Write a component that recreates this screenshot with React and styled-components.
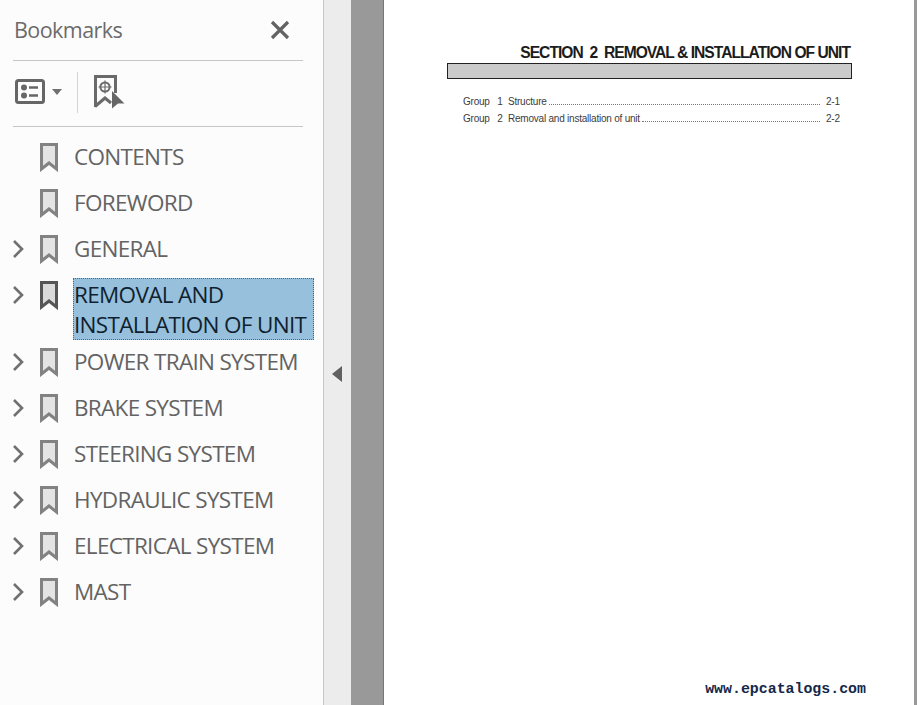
import React from "react";
import styled, { createGlobalStyle } from "styled-components";

const Global = createGlobalStyle`
  html, body { margin: 0; padding: 0; height: 100%; overflow: hidden; background: #fff; }
  #root { height: 100%; }
`;
const Shell = styled.div`
  display: flex; width: 917px; height: 705px; overflow: hidden;
  font-family: "Open Sans", "Noto Sans", sans-serif;
`;
const Sidebar = styled.aside`
  box-sizing: border-box; background: #fcfcfc; flex: none;
  border-right: 1px solid #c8c8c8; width: 324px;
  display: flex; flex-direction: column;
`;
const Header = styled.header`
  margin: 0 20px 0 13px; height: 60px;
  border-bottom: 1px solid #c6c6c6;
  display: flex; align-items: center; justify-content: space-between;
`;
const Title = styled.h2`
  margin: -2px 0 0 1px; font-size: 21.5px; font-weight: 400; color: #6b6b6b; letter-spacing: -0.55px;
`;
const CloseButton = styled.button`
  border: 0; background: none; padding: 0; margin-right: 13px; display: flex; height: 20px;
`;
const Toolbar = styled.div`
  margin: 0 20px 0 13px; height: 66px; box-sizing: border-box; padding-bottom: 3px;
  border-bottom: 1px solid #c6c6c6;
  display: flex; align-items: center;
`;
const ToolGroup = styled.div`
  display: flex; align-items: center; gap: 7px; padding-left: 2px; width: 62px; height: 41px;
  border-right: 1px solid #d4d4d4; margin-right: 16px;
`;
const List = styled.ul`
  list-style: none; margin: 7px 0 0; padding: 0;
`;
const Row = styled.li`
  display: flex; align-items: flex-start;
  padding: 8px 0 ${p => (p.$selected ? "0" : "8px")};
  margin-bottom: ${p => (p.$selected ? "-1px" : "0")};
`;
const Twist = styled.span`
  width: 24px; margin-left: 11px; margin-right: 5px; height: 30px; flex: none;
  display: flex; align-items: center; visibility: ${p => (p.$hidden ? "hidden" : "visible")};
`;
const Mark = styled.span`
  width: 18px; height: 30px; flex: none; margin-right: 16px; display: flex; align-items: center;
`;
const Label = styled.span`
  font-size: 22.5px; line-height: 30px; letter-spacing: -0.68px; white-space: nowrap;
  color: ${p => (p.$selected ? "#101f30" : "#636363")};
  ${p => p.$selected && `
    background: #97c0dc; outline: 1px dotted #4a6a80; outline-offset: -1px;
    margin-left: -1px; padding: 2px 9px 0 1px; margin-top: -2px; width: 231px;
  `}
`;
const Splitter = styled.div`
  width: 27px; flex: none; background: #ececec; box-sizing: border-box; padding: 42px 2px 0 0;
  display: flex; align-items: center; justify-content: center;
`;
const Gutter = styled.div`
  flex: 1; background: #999; display: flex; padding: 0 3px 0 32px;
`;
const Page = styled.main`
  flex: 1; background: #fff; box-sizing: border-box; border-left: 1px solid #777;
  padding: 43px 62px 7px 63px;
  display: flex; flex-direction: column; font-family: "Liberation Sans", Arial, sans-serif;
`;
const SectionTitle = styled.h1`
  margin: 0; text-align: right; padding-right: 2px; font-size: 15.6px; line-height: 20px; font-weight: 700;
  color: #1c1c1c; letter-spacing: -0.97px; white-space: pre;
`;
const SectionBar = styled.div`
  height: 14px; background: #cbcbcb; border: 1px solid #222;
`;
const Toc = styled.div`
  margin: 16px 12px 0 16px; display: flex; flex-direction: column; gap: 3px;
`;
const TocRow = styled.div`
  display: flex; align-items: baseline; height: 14px; font-size: 10px; line-height: 14px; color: #3c3c3c;
  letter-spacing: -0.22px; white-space: pre;
`;
const Group = styled.span` width: 45px; flex: none; `;
const Leader = styled.span`
  flex: 1; margin: 0 6px 0 2px; border-bottom: 1px dotted #777; height: 9px; min-width: 0;
`;
const PageNo = styled.span` width: 14px; flex: none; `;
const Footer = styled.div`
  margin-top: auto; text-align: right; margin-right: -14px;
  font: 700 14.9px/18px "Liberation Mono", monospace; color: #14284a;
`;

const Bookmark = ({ dark }) => (
  <svg width="18" height="29" viewBox="0 0 18 29" fill={dark ? "#dadada" : "#e4e4e4"} stroke={dark ? "#555" : "#828282"} strokeWidth="3">
    <path d="M1.5 1.5H16.5V26L9 20L1.5 26Z" />
  </svg>
);
const Chevron = () => (
  <svg width="14" height="20" viewBox="0 0 14 20" fill="none" stroke="#707070" strokeWidth="2.6">
    <path d="M3 2L11 10L3 18" />
  </svg>
);

const items = [
  ["CONTENTS"], ["FOREWORD"], ["GENERAL", 1], ["REMOVAL AND\nINSTALLATION OF UNIT", 1, 1],
  ["POWER TRAIN SYSTEM", 1], ["BRAKE SYSTEM", 1], ["STEERING SYSTEM", 1],
  ["HYDRAULIC SYSTEM", 1], ["ELECTRICAL SYSTEM", 1], ["MAST", 1],
];

export default function App() {
  return (
    <Shell>
      <Global />
      <Sidebar>
        <Header>
          <Title>Bookmarks</Title>
          <CloseButton aria-label="Close">
            <svg width="20" height="20" viewBox="0 0 20 20" stroke="#636363" strokeWidth="3.2" fill="none">
              <path d="M2 2L18 18M18 2L2 18" />
            </svg>
          </CloseButton>
        </Header>
        <Toolbar>
          <ToolGroup>
            <svg width="30" height="26" viewBox="0 0 30 26" fill="none">
              <rect x="1.5" y="1.5" width="27" height="22" rx="2" stroke="#666" strokeWidth="3" />
              <circle cx="9" cy="8.5" r="3" fill="#666" />
              <circle cx="9" cy="16.5" r="3" fill="#666" />
              <path d="M14 8.5H23M14 16.5H23" stroke="#666" strokeWidth="2.4" />
            </svg>
            <svg width="10" height="6" viewBox="0 0 10 6"><path d="M0 0H10L5 6Z" fill="#707070" /></svg>
          </ToolGroup>
          <svg width="31" height="34" viewBox="0 0 31 34" fill="none">
            <path d="M1.5 32V1.5H21.5V18" stroke="#6a6a6a" strokeWidth="3" />
            <path d="M1 31.5L11 23L17 28" stroke="#6a6a6a" strokeWidth="3" />
            <circle cx="11" cy="12" r="4.6" stroke="#6a6a6a" strokeWidth="2" />
            <path d="M11 5.5V18.5M4.5 12H17.5" stroke="#6a6a6a" strokeWidth="1.2" />
            <path d="M18 16L30.5 28.5H24L18 33.5Z" fill="#666" />
          </svg>
        </Toolbar>
        <List>
          {items.map(([text, expandable, selected]) => (
            <Row key={text} $selected={selected}>
              <Twist $hidden={!expandable}><Chevron /></Twist>
              <Mark><Bookmark dark={selected} /></Mark>
              <Label $selected={selected}>
                {text.split("\n").map((line, i) => (
                  <React.Fragment key={line}>{i > 0 && <br />}{line}</React.Fragment>
                ))}
              </Label>
            </Row>
          ))}
        </List>
      </Sidebar>
      <Splitter>
        <svg width="10" height="16" viewBox="0 0 10 16"><path d="M10 0V16L0 8Z" fill="#606060" /></svg>
      </Splitter>
      <Gutter>
        <Page>
          <SectionTitle>{"SECTION  2  REMOVAL & INSTALLATION OF UNIT"}</SectionTitle>
          <SectionBar />
          <Toc>
            <TocRow><Group>{"Group   1"}</Group>Structure<Leader /><PageNo>2-1</PageNo></TocRow>
            <TocRow><Group>{"Group   2"}</Group>Removal and installation of unit<Leader /><PageNo>2-2</PageNo></TocRow>
          </Toc>
          <Footer>www.epcatalogs.com</Footer>
        </Page>
      </Gutter>
    </Shell>
  );
}
